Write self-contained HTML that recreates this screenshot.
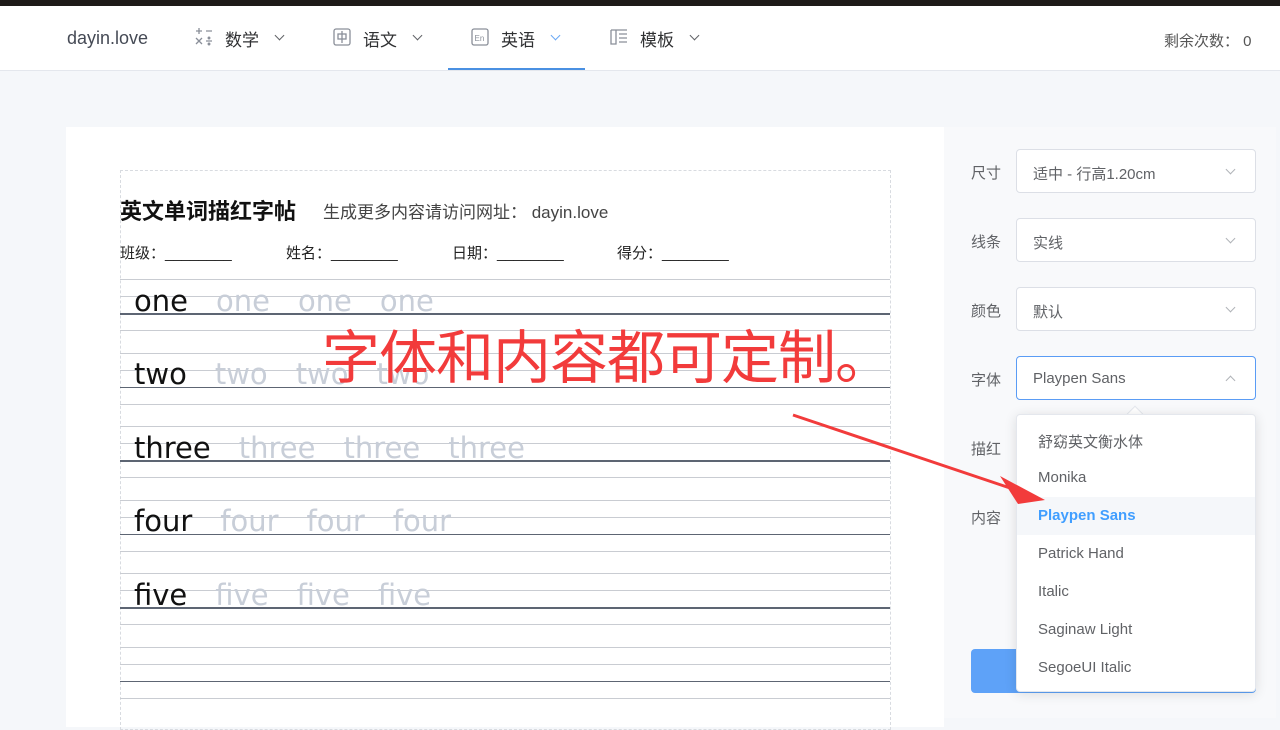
<!DOCTYPE html>
<html><head><meta charset="utf-8"><style>
*{margin:0;padding:0;box-sizing:border-box}
body{width:1280px;height:720px;overflow:hidden;background:#f5f7fa;font-family:"Liberation Sans","Noto Sans CJK SC",sans-serif;position:relative;color:#303133}
.topbar{position:absolute;left:0;top:0;width:1280px;height:6px;background:#1e1a18}
.nav{position:absolute;left:0;top:6px;width:1280px;height:65px;background:#fff;border-bottom:1px solid #e4e7ed}
.abs{position:absolute}
.nav .t{position:absolute;top:20px;font-size:17px;color:#303133}
.chev{position:absolute;width:7px;height:7px;border-right:1.3px solid #606266;border-bottom:1.3px solid #606266;transform:rotate(45deg)}
.paper{position:absolute;left:66px;top:127px;width:878px;height:600px;background:#fff}
.dash{position:absolute;left:120px;top:170px;width:771px;height:560px;border:1px dashed #d8dbe0}
.ln{position:absolute;left:120px;width:770px;height:1px;background:#c9ccd2}
.ln.d{background:#5d6573;height:1.5px}
.w{position:absolute;font-family:"DejaVu Sans",sans-serif;font-size:29px;white-space:nowrap;color:#111}
.w span{color:#c8ced8;margin-left:28px}
.panel{position:absolute;left:944px;top:127px;width:332px;height:591px;background:#f8f9fb}
.lab{position:absolute;left:971px;font-size:15px;color:#606266}
.sel{position:absolute;left:1016px;width:240px;height:44px;border:1px solid #dcdfe6;border-radius:4px;background:#fff;font-size:15px;color:#606266;padding:13px 16px}
.dd{position:absolute;left:1016px;top:414px;width:240px;height:278px;background:#fff;border-radius:4px;box-shadow:0 2px 12px rgba(0,0,0,.12);border:1px solid #e4e7ed}
.it{position:absolute;left:0;width:238px;height:38px;padding:10px 21px;font-size:15px;color:#606266}
.info{position:absolute;top:242px;font-size:15px;color:#222;white-space:pre}
</style></head><body>
<div class="topbar"></div>
<div class="nav">
 <div class="t" style="left:67px;top:22px;font-size:18px;color:#454a55">dayin.love</div>
 <svg class="abs" style="left:194px;top:20px" width="20" height="20" viewBox="0 0 20 20" stroke="#8a8f99" stroke-width="1.3" fill="none"><path d="M2 5h6M5 2v6M12 5h6M2 12l6 6M8 12l-6 6M12 15h6"/><circle cx="15" cy="12" r=".8" fill="#8a8f99"/><circle cx="15" cy="18" r=".8" fill="#8a8f99"/></svg>
 <div class="t" style="left:225px">数学</div><div class="chev" style="left:276px;top:26px"></div>
 <svg class="abs" style="left:333px;top:22px" width="18" height="18" viewBox="0 0 18 18" stroke="#8a8f99" stroke-width="1.3" fill="none"><rect x="1" y="1" width="16" height="16" rx="2"/><rect x="5" y="6" width="8" height="5"/><path d="M9 3v12"/></svg>
 <div class="t" style="left:363px">语文</div><div class="chev" style="left:414px;top:26px"></div>
 <svg class="abs" style="left:471px;top:22px" width="18" height="18" viewBox="0 0 18 18"><rect x="1" y="1" width="16" height="16" rx="2" stroke="#8a8f99" stroke-width="1.3" fill="none"/><text x="3.5" y="13" font-size="8" fill="#8a8f99" font-family="Liberation Sans">En</text></svg>
 <div class="t" style="left:501px">英语</div><div class="chev" style="left:552px;top:26px;border-color:#6aa8f5"></div>
 <div class="abs" style="left:448px;top:62px;width:137px;height:2px;background:#4a90e2"></div>
 <svg class="abs" style="left:610px;top:22px" width="18" height="18" viewBox="0 0 18 18" stroke="#8a8f99" stroke-width="1.3" fill="none"><path d="M1 2h16M1 2v14h5V2M9 6h8M9 10h8M9 14h8"/></svg>
 <div class="t" style="left:640px">模板</div><div class="chev" style="left:691px;top:26px"></div>
 <div class="t" style="left:1164px;top:24px;font-size:15px;color:#555">剩余次数：&nbsp;0</div>
</div>
<div class="paper"></div>
<div class="dash"></div>
<div class="abs" style="left:120px;top:194px;font-size:22px;font-weight:bold;color:#111">英文单词描红字帖</div>
<div class="abs" style="left:323px;top:198px;font-size:17px;color:#444">生成更多内容请访问网址：&nbsp;dayin.love</div>
<div class="info" style="left:120px">班级：________</div>
<div class="info" style="left:286px">姓名：________</div>
<div class="info" style="left:452px">日期：________</div>
<div class="info" style="left:617px">得分：________</div>
<div id="lines"></div>
<div class="w" style="left:134px;top:284px">one<span>one</span><span>one</span><span>one</span></div>
<div class="w" style="left:134px;top:357px">two<span>two</span><span>two</span><span>two</span></div>
<div class="w" style="left:134px;top:431px">three<span>three</span><span>three</span><span>three</span></div>
<div class="w" style="left:134px;top:504px">four<span>four</span><span>four</span><span>four</span></div>
<div class="w" style="left:134px;top:578px">five<span>five</span><span>five</span><span>five</span></div>
<div class="abs" style="left:322px;top:311px;font-size:58px;color:#f23b3b;white-space:nowrap;letter-spacing:-1px">字体和内容都可定制。</div>
<div class="panel"></div>
<div class="lab" style="top:162px">尺寸</div><div class="sel" style="top:149px">适中 - 行高1.20cm</div>
<div class="lab" style="top:231px">线条</div><div class="sel" style="top:218px">实线</div>
<div class="lab" style="top:300px">颜色</div><div class="sel" style="top:287px">默认</div>
<div class="lab" style="top:369px">字体</div><div class="sel" style="top:356px;border-color:#5a9cf5">Playpen Sans</div>
<div class="chev" style="left:1227px;top:166px;border-color:#b0b3b8"></div>
<div class="chev" style="left:1227px;top:235px;border-color:#b0b3b8"></div>
<div class="chev" style="left:1227px;top:304px;border-color:#b0b3b8"></div>
<div class="chev" style="left:1227px;top:377px;border-color:#b0b3b8;transform:rotate(225deg)"></div>
<div class="lab" style="top:438px">描红</div>
<div class="lab" style="top:507px">内容</div>
<div class="abs" style="left:971px;top:649px;width:285px;height:44px;background:#5ea2f8;border-radius:4px"></div>
<div class="abs" style="left:1129px;top:408px;width:12px;height:12px;background:#fff;transform:rotate(45deg);border-left:1px solid #e4e7ed;border-top:1px solid #e4e7ed"></div>
<div class="dd">
 <div class="it" style="top:6px">舒窈英文衡水体</div>
 <div class="it" style="top:44px">Monika</div>
 <div class="it" style="top:82px;background:#f5f7fa;color:#409eff;font-weight:bold">Playpen Sans</div>
 <div class="it" style="top:120px">Patrick Hand</div>
 <div class="it" style="top:158px">Italic</div>
 <div class="it" style="top:196px">Saginaw Light</div>
 <div class="it" style="top:234px">SegoeUI Italic</div>
</div>
<svg class="abs" style="left:0;top:0" width="1280" height="720"><path d="M793 415 L1010 488" stroke="#f23b3b" stroke-width="3"/><path d="M1045 500 L1000 476 L1018 504 Z" fill="#f23b3b"/></svg>
<script>
var h='';var gs=[279,352.5,426,499.5,573,646.5];
gs.forEach(function(g){[0,17,34,51].forEach(function(o,i){h+='<div class="ln'+(i==2?' d':'')+'" style="top:'+(g+o)+'px"></div>';});});
document.getElementById('lines').innerHTML=h;
</script>
</body></html>
